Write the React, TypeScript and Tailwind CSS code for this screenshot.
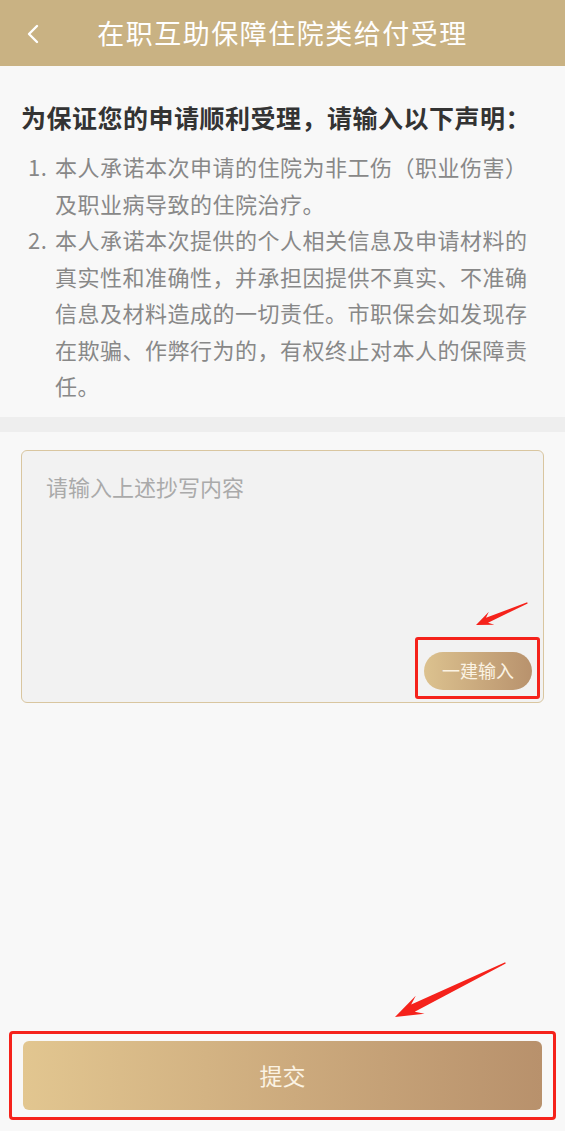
import { ChevronLeft } from 'lucide-react';

const items = [
  '本人承诺本次申请的住院为非工伤（职业伤害）及职业病导致的住院治疗。',
  '本人承诺本次提供的个人相关信息及申请材料的真实性和准确性，并承担因提供不真实、不准确信息及材料造成的一切责任。市职保会如发现存在欺骗、作弊行为的，有权终止对本人的保障责任。',
];

// red annotation arrow, tip at (0,0), tail along +x
function Arrow({ x, y, angle, len, head, half, notch, shaft }: { x: number; y: number; angle: number; len: number; head: number; half: number; notch: number; shaft: number }) {
  const pts = [
    [0, 0],
    [head, -half],
    [notch, -shaft],
    [len, -0.6],
    [len, 0.6],
    [notch, shaft],
    [head, half],
  ]
    .map((p) => p.join(','))
    .join(' ');
  return <polygon points={pts} fill="#f5221b" transform={`translate(${x} ${y}) rotate(${angle})`} />;
}

export default function App() {
  return (
    <div
      className="relative flex h-[1131px] w-full flex-col bg-[#f8f8f8]"
      style={{ fontFamily: '"Noto Sans CJK SC", "Noto Sans", sans-serif' }}
    >
      <header className="relative flex h-[66px] shrink-0 items-center justify-center bg-[#c9b283]">
        <ChevronLeft className="absolute left-[17px] top-[18px] h-[32px] w-[32px] text-white" strokeWidth={1.8} />
        <h1 className="text-[27px] tracking-[1.5px] text-white">在职互助保障住院类给付受理</h1>
      </header>

      <section className="px-[21px] pb-[13px] pt-[33px]">
        <h2 className="text-[25px] font-bold leading-[36px] tracking-[0.5px] text-[#333]">为保证您的申请顺利受理，请输入以下声明：</h2>
        <ol className="mt-[13px] text-[22px] leading-[36.5px] tracking-[0.5px] text-[#888]">
          {items.map((t, i) => (
            <li key={i} className="flex">
              <span className="w-[34px] shrink-0 pl-[7px]">{i + 1}.</span>
              <span className="pr-[2px]">{t}</span>
            </li>
          ))}
        </ol>
      </section>

      <div className="h-[15px] shrink-0 bg-[#eeeeee]" />

      <div className="px-[21px] pt-[18px]">
        <div className="relative h-[253px] rounded-[6px] border-[1.5px] border-[#d9c6a0] bg-[#f2f2f2]">
          <textarea
            className="h-full w-full resize-none bg-transparent px-[24px] pt-[20px] text-[22px] leading-[30px] text-[#333] outline-none placeholder:text-[#aaa]"
            placeholder="请输入上述抄写内容"
          />
          <button className="absolute bottom-[12px] right-[11px] flex h-[38px] w-[108px] items-center justify-center rounded-full bg-gradient-to-r from-[#dcc28f] to-[#b8926d] text-[18px] text-[#fbf3e4]">
            一建输入
          </button>
          <div className="pointer-events-none absolute bottom-[3px] right-[3px] h-[62px] w-[125px] rounded-[3px] border-[3px] border-[#f5221b]" />
        </div>
      </div>

      <div className="flex-1" />

      <div className="mx-[9px] mb-[11px] rounded-[4px] border-[3px] border-[#f5221b] px-[11px] py-[7px]">
        <button className="flex h-[69px] w-full items-center justify-center rounded-[6px] bg-gradient-to-r from-[#e2c690] to-[#b8916c] text-[23px] text-[#fbf3e4]">
          提交
        </button>
      </div>

      <svg className="pointer-events-none absolute left-0 top-0" width="565" height="1131">
        <Arrow x={476} y={625} angle={-23.3} len={56} head={17} half={7} notch={12} shaft={2.6} />
        <Arrow x={395} y={1017} angle={-26.1} len={123} head={28} half={10} notch={20} shaft={4} />
      </svg>
    </div>
  );
}
